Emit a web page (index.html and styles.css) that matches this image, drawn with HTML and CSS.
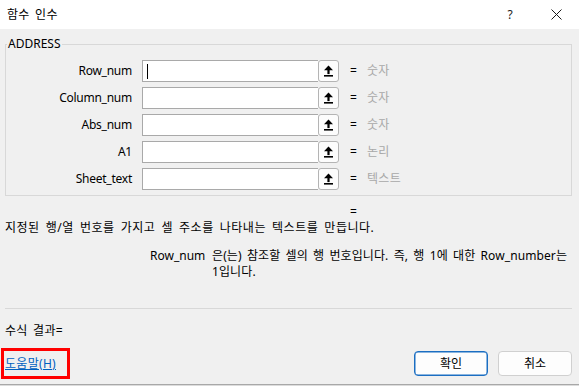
FILE: index.html
```html
<!DOCTYPE html>
<html lang="ko">
<head>
<meta charset="utf-8">
<title>함수 인수</title>
<link rel="stylesheet" href="styles.css">
</head>
<body>
<div class="window">
  <header class="titlebar">
    <span class="title">함수 인수</span>
    <div class="tb-buttons">
      <span class="tb-help">?</span>
      <span class="tb-close">
        <svg width="11" height="11" viewBox="0 0 11 11"><path d="M0.5 0.5 L10.5 10.5 M10.5 0.5 L0.5 10.5" stroke="#1a1a1a" stroke-width="1" fill="none"/></svg>
      </span>
    </div>
  </header>
  <main class="content">
    <fieldset class="group">
      <legend class="legend">ADDRESS</legend>
      <div class="rows">
        <div class="row">
          <span class="lbl">Row_num</span>
          <div class="field"><div class="input"><span class="caret"></span></div><span class="ref"><svg width="9" height="12" viewBox="0 0 9 12"><path d="M0 5.2 L4.5 0.6 L9 5.2 Z" fill="#000"/><rect x="3.4" y="4.5" width="2.2" height="4.6" fill="#000"/><rect x="0" y="10" width="9" height="1.6" fill="#000"/></svg></span></div>
          <span class="eq">=</span><span class="val">숫자</span>
        </div>
        <div class="row">
          <span class="lbl">Column_num</span>
          <div class="field"><div class="input"></div><span class="ref"><svg width="9" height="12" viewBox="0 0 9 12"><path d="M0 5.2 L4.5 0.6 L9 5.2 Z" fill="#000"/><rect x="3.4" y="4.5" width="2.2" height="4.6" fill="#000"/><rect x="0" y="10" width="9" height="1.6" fill="#000"/></svg></span></div>
          <span class="eq">=</span><span class="val">숫자</span>
        </div>
        <div class="row">
          <span class="lbl">Abs_num</span>
          <div class="field"><div class="input"></div><span class="ref"><svg width="9" height="12" viewBox="0 0 9 12"><path d="M0 5.2 L4.5 0.6 L9 5.2 Z" fill="#000"/><rect x="3.4" y="4.5" width="2.2" height="4.6" fill="#000"/><rect x="0" y="10" width="9" height="1.6" fill="#000"/></svg></span></div>
          <span class="eq">=</span><span class="val">숫자</span>
        </div>
        <div class="row">
          <span class="lbl">A1</span>
          <div class="field"><div class="input"></div><span class="ref"><svg width="9" height="12" viewBox="0 0 9 12"><path d="M0 5.2 L4.5 0.6 L9 5.2 Z" fill="#000"/><rect x="3.4" y="4.5" width="2.2" height="4.6" fill="#000"/><rect x="0" y="10" width="9" height="1.6" fill="#000"/></svg></span></div>
          <span class="eq">=</span><span class="val">논리</span>
        </div>
        <div class="row">
          <span class="lbl">Sheet_text</span>
          <div class="field"><div class="input"></div><span class="ref"><svg width="9" height="12" viewBox="0 0 9 12"><path d="M0 5.2 L4.5 0.6 L9 5.2 Z" fill="#000"/><rect x="3.4" y="4.5" width="2.2" height="4.6" fill="#000"/><rect x="0" y="10" width="9" height="1.6" fill="#000"/></svg></span></div>
          <span class="eq">=</span><span class="val">텍스트</span>
        </div>
      </div>
    </fieldset>
    <div class="result-eq">=</div>
    <p class="desc">지정된 행/열 번호를 가지고 셀 주소를 나타내는 텍스트를 만듭니다.</p>
    <div class="help">
      <span class="help-name">Row_num</span>
      <span class="help-text">은(는) 참조할 셀의 행 번호입니다. 즉, 행 1에 대한 Row_number는<br>1입니다.</span>
    </div>
    <hr class="sep">
    <div class="formula">수식 결과=</div>
    <footer class="footer">
      <div class="helplink-box"><a class="helplink" href="#">도움말(H)</a></div>
      <div class="actions">
        <span class="btn btn-primary">확인</span>
        <span class="btn">취소</span>
      </div>
    </footer>
  </main>
</div>
</body>
</html>
```
FILE: styles.css
```css
html, body {
  margin: 0;
  padding: 0;
  background: #dcdcdc;
}
body {
  font-family: "Noto Sans", "Noto Sans CJK KR", sans-serif;
  font-size: 12px;
  color: #1a1a1a;
  word-spacing: 1px;
}
.window {
  width: 579px;
  height: 384px;
  background: #f0f0f0;
  border-bottom: 1px solid #a8a8a8;
  overflow: hidden;
}
.titlebar {
  height: 29px;
  background: #ffffff;
  display: flex;
  align-items: center;
  justify-content: space-between;
  padding-left: 7px;
}
.title {
  font-size: 12px;
  line-height: 16px;
  color: #000;
  letter-spacing: 0.3px;
  word-spacing: 2px;
}
.tb-buttons {
  display: flex;
  align-items: center;
}
.tb-help {
  width: 14px;
  text-align: center;
  font-size: 12px;
  line-height: 16px;
  margin-right: 34px;
}
.tb-close {
  display: flex;
  margin-right: 17px;
}
.content {
  padding: 0;
}
.group {
  margin: 7px 7px 0 5px;
  padding: 8px 0 5px 0;
  border: 1px solid #d8d8d8;
  min-width: 0;
}
.legend {
  margin-left: 1px;
  padding: 0 1px;
  line-height: 16px;
  color: #000;
}
.rows {
  display: flex;
  flex-direction: column;
  gap: 5px;
}
.row {
  display: flex;
  align-items: center;
  height: 22px;
}
.lbl {
  width: 126px;
  text-align: right;
  line-height: 16px;
  color: #000;
  letter-spacing: -0.25px;
}
.field {
  margin-left: 10px;
  width: 197px;
  height: 22px;
  display: flex;
}
.input {
  flex: 1;
  height: 22px;
  box-sizing: border-box;
  border: 1px solid #a9a9a9;
  border-right: none;
  background: #fff;
  display: flex;
  align-items: center;
}
.caret {
  width: 1px;
  height: 15px;
  margin-left: 4px;
  background: #000;
}
.ref {
  width: 21px;
  height: 22px;
  box-sizing: border-box;
  border: 1px solid #b4b4b4;
  border-radius: 3px;
  background: #fcfcfc;
  display: flex;
  align-items: center;
  justify-content: center;
}
.eq {
  margin-left: 11px;
  width: 17px;
  line-height: 16px;
  color: #000;
}
.val {
  line-height: 16px;
  color: #a8a8a8;
  letter-spacing: 0.3px;
}
.result-eq {
  margin: 8px 0 0 350px;
  line-height: 16px;
  color: #000;
}
.desc {
  margin: 0 0 0 5px;
  line-height: 16px;
  color: #000;
  letter-spacing: 0.5px;
  word-spacing: 2.5px;
}
.help {
  margin: 12px 0 0 150px;
  display: flex;
  line-height: 16px;
  color: #000;
}
.help-name {
  width: 62px;
}
.help-text {
  white-space: nowrap;
  letter-spacing: 0.1px;
  word-spacing: 2px;
}
.sep {
  margin: 28px 7px 0 5px;
  border: none;
  border-top: 1px solid #d8d8d8;
  height: 0;
}
.formula {
  margin: 14px 0 0 5px;
  line-height: 16px;
  color: #000;
  letter-spacing: 0.3px;
  word-spacing: 2px;
}
.footer {
  margin-top: 9px;
  display: flex;
  justify-content: space-between;
  align-items: center;
}
.helplink-box {
  margin-left: 1px;
  width: 69px;
  height: 31px;
  box-sizing: border-box;
  border: 3px solid #ff0000;
  display: flex;
  align-items: center;
  padding-left: 1px;
}
.helplink {
  color: #0060c0;
  text-decoration: underline;
  line-height: 16px;
  letter-spacing: 0.3px;
}
.actions {
  display: flex;
  gap: 10px;
  margin-right: 7px;
}
.btn {
  width: 74px;
  height: 25px;
  box-sizing: border-box;
  border: 1px solid #d0d0d0;
  border-radius: 4px;
  background: #fdfdfd;
  display: flex;
  align-items: center;
  justify-content: center;
  line-height: 16px;
  color: #000;
}
.btn-primary {
  border-color: #1b6ec2;
  box-shadow: inset 0 0 0 0.5px #1b6ec2;
}
```
